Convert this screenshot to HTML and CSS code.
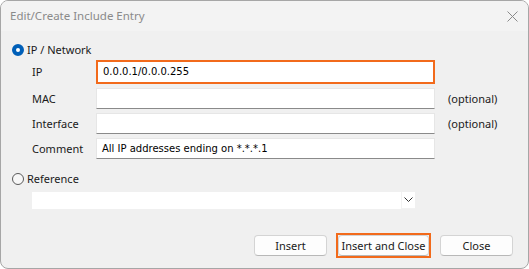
FILE: index.html
```html
<!DOCTYPE html>
<html>
<head>
<meta charset="utf-8">
<link rel="stylesheet" href="styles.css">
</head>
<body>
<div class="window">
  <div class="titlebar">
    <span class="title">Edit/Create Include Entry</span>
    <svg class="close-x" width="11" height="11" viewBox="0 0 11 11"><path d="M0.5 0.5 L10.5 10.5 M10.5 0.5 L0.5 10.5" stroke="#8a8a8a" stroke-width="1" fill="none"/></svg>
  </div>
  <div class="content">
    <div class="radio-row">
      <span class="radio selected"></span>
      <span class="radio-label">IP / Network</span>
    </div>
    <div class="grid">
      <div class="label">IP</div>
      <div class="field focused">0.0.0.1/0.0.0.255</div>
      <div class="note"></div>
      <div class="label">MAC</div>
      <div class="field"></div>
      <div class="note">(optional)</div>
      <div class="label">Interface</div>
      <div class="field"></div>
      <div class="note">(optional)</div>
      <div class="label">Comment</div>
      <div class="field">All IP addresses ending on *.*.*.1</div>
      <div class="note"></div>
    </div>
    <div class="radio-row ref">
      <span class="radio"></span>
      <span class="radio-label">Reference</span>
    </div>
    <div class="combo">
      <span class="combo-btn"><svg width="9" height="6" viewBox="0 0 9 6"><path d="M0.5 0.5 L4.5 4.5 L8.5 0.5" stroke="#333" stroke-width="1" fill="none"/></svg></span>
    </div>
    <div class="buttons">
      <button class="btn">Insert</button>
      <span class="focus-ring"><button class="btn default">Insert and Close</button></span>
      <button class="btn">Close</button>
    </div>
  </div>
</div>
</body>
</html>
```
FILE: styles.css
```css
html, body {
  margin: 0;
  padding: 0;
  background: #ffffff;
}
.window {
  width: 529px;
  height: 269px;
  box-sizing: border-box;
  border: 1px solid #a6a6a6;
  border-radius: 8px;
  overflow: hidden;
  background: #f0f0f0;
  font-family: "Noto Sans", "Open Sans", sans-serif;
  font-size: 11px;
  color: #1a1a1a;
  display: flex;
  flex-direction: column;
}
.titlebar {
  height: 30px;
  flex: none;
  background: #f3f3f3;
  display: flex;
  align-items: center;
  justify-content: space-between;
  padding: 0 10px 0 9px;
}
.title {
  color: #8a8a8a;
  font-size: 11.5px;
  margin-top: -1px;
}
.close-x {
  display: block;
}
.content {
  display: flex;
  flex-direction: column;
  padding: 13px 15px 0 11px;
}
.radio-row {
  display: flex;
  align-items: center;
  height: 12px;
  gap: 3px;
}
.radio {
  width: 12px;
  height: 12px;
  box-sizing: border-box;
  border-radius: 50%;
  border: 1px solid #5a5a5a;
  background: #f7f7f7;
  flex: none;
}
.radio.selected {
  border: 4px solid #005fb8;
  background: #ffffff;
}
.radio-label {
  line-height: 12px;
}
.grid {
  display: grid;
  grid-template-columns: 64px 339px auto;
  row-gap: 4px;
  margin-top: 4px;
  margin-left: 20px;
  align-items: center;
}
.label {
  line-height: 14px;
}
.field {
  height: 21px;
  box-sizing: border-box;
  background: #ffffff;
  border: 1px solid #e6e6e6;
  border-bottom-color: #8a8a8a;
  padding-left: 5px;
  font-family: "DejaVu Sans", Verdana, sans-serif;
  font-size: 10px;
  line-height: 19px;
  color: #000;
}
.field.focused {
  height: 24px;
  border: 2px solid #f26a1b;
  padding-left: 5px;
  line-height: 20px;
}
.note {
  line-height: 14px;
  padding-left: 13px;
}
.radio-row.ref {
  margin-top: 14px;
}
.combo {
  margin-top: 7px;
  margin-left: 20px;
  width: 383px;
  height: 17px;
  background: #ffffff;
  display: flex;
  justify-content: flex-end;
  align-items: stretch;
}
.combo-btn {
  width: 13px;
  display: flex;
  align-items: center;
  justify-content: center;
  border-left: 1px solid #f2f2f2;
  border-bottom: 1px solid #f2f2f2;
}
.buttons {
  display: flex;
  justify-content: flex-end;
  align-items: center;
  gap: 9px;
  margin-top: 24px;
}
.btn {
  width: 73px;
  height: 21px;
  box-sizing: border-box;
  background: #fdfdfd;
  border: 1px solid #d4d4d4;
  border-bottom-color: #b8b8b8;
  border-radius: 4px;
  font-family: "Noto Sans", "Open Sans", sans-serif;
  font-size: 11px;
  color: #1a1a1a;
  padding: 0;
  line-height: 18px;
  white-space: nowrap;
}
.focus-ring {
  display: flex;
  border: 2px solid #f26a1b;
}
.btn.default {
  width: 91px;
}
```
